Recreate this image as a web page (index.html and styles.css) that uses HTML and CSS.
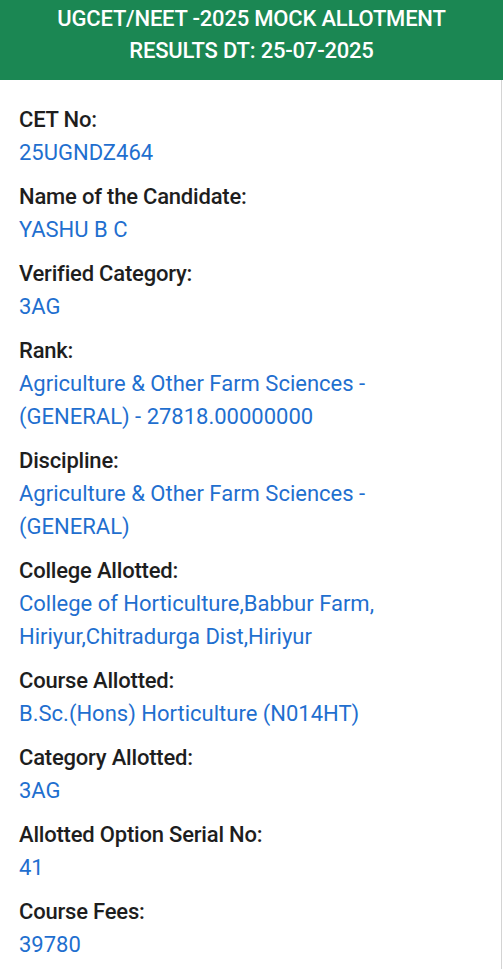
FILE: index.html
```html
<!DOCTYPE html>
<html>
<head>
<meta charset="utf-8">
<link rel="stylesheet" href="styles.css">
</head>
<body>
<div class="page">
  <div class="header">UGCET/NEET -2025 MOCK ALLOTMENT<br>RESULTS DT: 25-07-2025</div>
  <div class="content">
    <div class="field"><div class="label">CET No:</div><div class="value">25UGNDZ464</div></div>
    <div class="field"><div class="label">Name of the Candidate:</div><div class="value">YASHU B C</div></div>
    <div class="field"><div class="label">Verified Category:</div><div class="value">3AG</div></div>
    <div class="field"><div class="label">Rank:</div><div class="value">Agriculture &amp; Other Farm Sciences -<br>(GENERAL) - 27818.00000000</div></div>
    <div class="field"><div class="label">Discipline:</div><div class="value">Agriculture &amp; Other Farm Sciences -<br>(GENERAL)</div></div>
    <div class="field"><div class="label">College Allotted:</div><div class="value">College of Horticulture,Babbur Farm,<br>Hiriyur,Chitradurga Dist,Hiriyur</div></div>
    <div class="field"><div class="label">Course Allotted:</div><div class="value">B.Sc.(Hons) Horticulture (N014HT)</div></div>
    <div class="field"><div class="label">Category Allotted:</div><div class="value">3AG</div></div>
    <div class="field"><div class="label">Allotted Option Serial No:</div><div class="value">41</div></div>
    <div class="field"><div class="label">Course Fees:</div><div class="value">39780</div></div>
  </div>
</div>
</body>
</html>
```
FILE: styles.css
```css
html, body {
  margin: 0;
  padding: 0;
  background: #ffffff;
}
body {
  font-family: Roboto, "Liberation Sans", sans-serif;
}
.page {
  width: 503px;
  height: 969px;
  overflow: hidden;
}
.header {
  background: #1b8753;
  color: #ffffff;
  font-size: 22px;
  font-weight: 500;
  line-height: 32px;
  text-align: center;
  height: 80px;
  box-sizing: border-box;
  padding-top: 3px;
  letter-spacing: -0.2px;
}
.content {
  padding: 23px 0 0 19px;
  border-right: 1px solid #d4d4d4;
  margin-right: 1px;
  height: 889px;
  box-sizing: border-box;
}
.field {
  margin-bottom: 11px;
}
.label {
  font-size: 22px;
  font-weight: 500;
  color: #1e1e1e;
  line-height: 33px;
  letter-spacing: -0.2px;
}
.value {
  font-size: 22px;
  font-weight: 400;
  color: #1f6fcf;
  line-height: 33px;
}
```
